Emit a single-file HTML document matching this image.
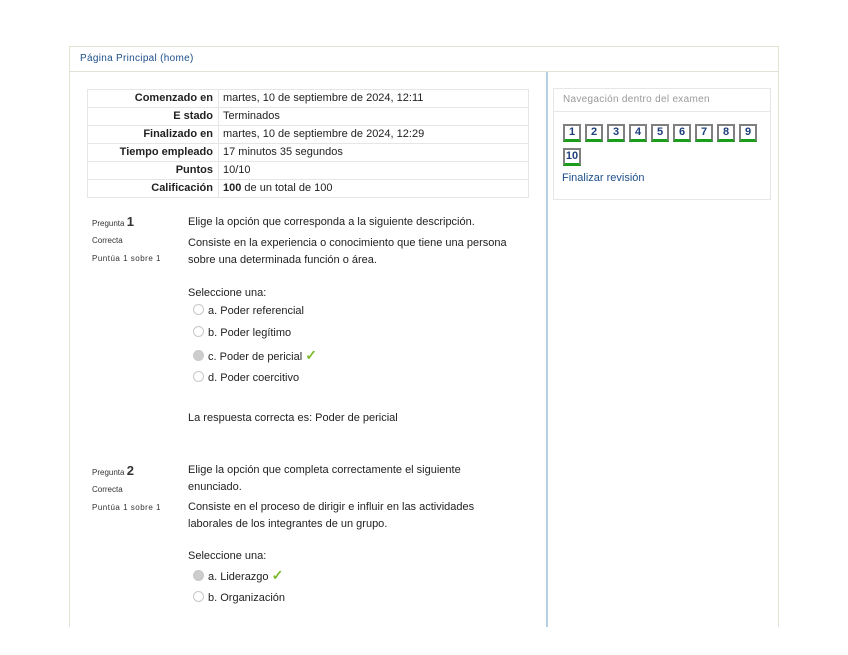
<!DOCTYPE html>
<html><head><meta charset="utf-8"><style>
body{margin:0;width:848px;height:655px;background:#fff;font-family:"Liberation Sans",sans-serif;font-size:11px;color:#222;position:relative;overflow:hidden}
.box{position:absolute;left:69px;top:46px;width:708px;height:580px;border:1px solid #e3e3d3;border-bottom:none}
.hdr{position:absolute;left:0;top:0;width:708px;height:24px;border-bottom:1px solid #e3e3d3}
.hdr span{position:absolute;left:10px;top:6px;font-size:10px;color:#1d4f8a;letter-spacing:.3px}
.vl{position:absolute;left:476px;top:25px;width:2px;height:555px;background:#b7cfe3}
table{position:absolute;left:87px;top:89px;border-collapse:collapse;width:442px}
td{border:1px solid #e6e6e6;height:17px;padding:0 4px;font-size:11px;line-height:17px}
td.l{text-align:right;font-weight:bold;width:121px;padding-right:5px}
.a{position:absolute;font-size:11px;line-height:18px}
.s{position:absolute;font-size:8px;color:#333}
.r{display:inline-block;width:9px;height:9px;border:1px solid #c8c8c8;border-radius:50%;vertical-align:-1px;margin-right:4px;background:#fff}
.r.on{background:#ccc}
.ck{color:#7dbb2c;font-weight:bold;font-size:14px}
.nav{position:absolute;left:553px;top:88px;width:216px;height:110px;border:1px solid #e6e6e6}
.nav .t{height:22px;border-bottom:1px solid #e6e6e6;color:#999;font-size:10px;line-height:22px;padding-left:9px;letter-spacing:.3px}
.q{position:absolute;width:14px;height:13px;border:2px solid #808080;border-bottom:3px solid #1a9d1a;text-align:center;font-weight:bold;color:#1d3f7a;font-size:11px;line-height:13px;background:#fff}
</style></head><body>
<div class="box"><div class="hdr"><span>Página Principal (home)</span></div><div class="vl"></div></div>
<table>
<tr><td class="l">Comenzado en</td><td>martes, 10 de septiembre de 2024, 12:11</td></tr>
<tr><td class="l">E stado</td><td>Terminados</td></tr>
<tr><td class="l">Finalizado en</td><td>martes, 10 de septiembre de 2024, 12:29</td></tr>
<tr><td class="l">Tiempo empleado</td><td>17 minutos 35 segundos</td></tr>
<tr><td class="l">Puntos</td><td>10/10</td></tr>
<tr><td class="l">Calificación</td><td><b>100</b> de un total de 100</td></tr>
</table>
<div class="s" style="left:92px;top:214px">Pregunta <b style="font-size:13px">1</b></div>
<div class="s" style="left:92px;top:236px">Correcta</div>
<div class="s" style="left:92px;top:254px;letter-spacing:.5px">Puntúa 1 sobre 1</div>
<div class="a" style="left:188px;top:213px">Elige la opción que corresponda a la siguiente descripción.</div>
<div class="a" style="left:188px;top:235px;line-height:17px">Consiste en la experiencia o conocimiento que tiene una persona<br>sobre una determinada función o área.</div>
<div class="a" style="left:188px;top:284px">Seleccione una:</div>
<div class="a" style="left:193px;top:302px"><span class="r"></span>a. Poder referencial</div>
<div class="a" style="left:193px;top:324px"><span class="r"></span>b. Poder legítimo</div>
<div class="a" style="left:193px;top:346px"><span class="r on"></span>c. Poder de pericial <span class="ck">✓</span></div>
<div class="a" style="left:193px;top:369px"><span class="r"></span>d. Poder coercitivo</div>
<div class="a" style="left:188px;top:409px">La respuesta correcta es: Poder de pericial</div>
<div class="s" style="left:92px;top:463px">Pregunta <b style="font-size:13px">2</b></div>
<div class="s" style="left:92px;top:485px">Correcta</div>
<div class="s" style="left:92px;top:503px;letter-spacing:.5px">Puntúa 1 sobre 1</div>
<div class="a" style="left:188px;top:462px;line-height:17px">Elige la opción que completa correctamente el siguiente<br>enunciado.</div>
<div class="a" style="left:188px;top:499px;line-height:17px">Consiste en el proceso de dirigir e influir en las actividades<br>laborales de los integrantes de un grupo.</div>
<div class="a" style="left:188px;top:547px">Seleccione una:</div>
<div class="a" style="left:193px;top:566px"><span class="r on"></span>a. Liderazgo <span class="ck">✓</span></div>
<div class="a" style="left:193px;top:589px"><span class="r"></span>b. Organización</div>
<div class="nav"><div class="t">Navegación dentro del examen</div></div>
<div class="q" style="left:563px;top:124px">1</div>
<div class="q" style="left:585px;top:124px">2</div>
<div class="q" style="left:607px;top:124px">3</div>
<div class="q" style="left:629px;top:124px">4</div>
<div class="q" style="left:651px;top:124px">5</div>
<div class="q" style="left:673px;top:124px">6</div>
<div class="q" style="left:695px;top:124px">7</div>
<div class="q" style="left:717px;top:124px">8</div>
<div class="q" style="left:739px;top:124px">9</div>
<div class="q" style="left:563px;top:148px">10</div>
<div class="a" style="left:562px;top:169px;color:#1d4f8a">Finalizar revisión</div>
</body></html>
